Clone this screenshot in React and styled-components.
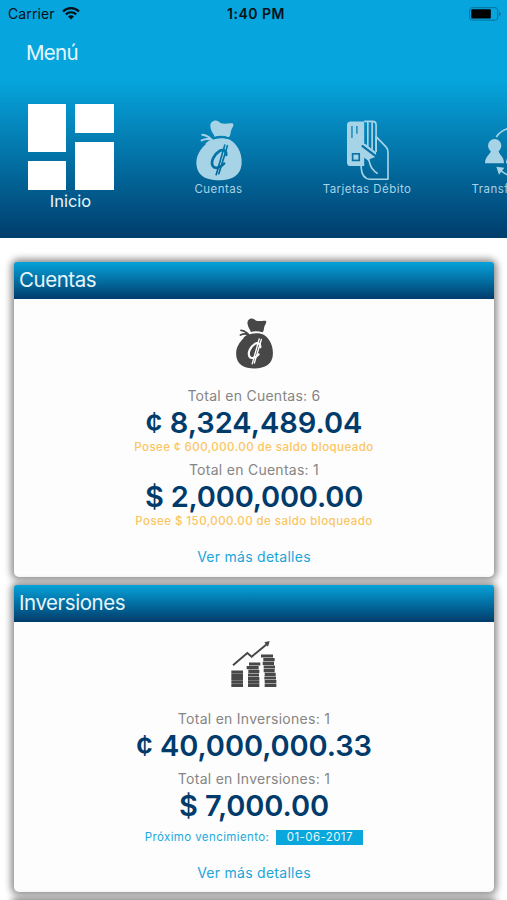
import React from 'react';
import styled, { createGlobalStyle } from 'styled-components'

function MoneyBag({ id, ...props }) {
  return (
    <svg viewBox="0 0 145 185" preserveAspectRatio="none" fill="currentColor" { ...props }>
      <mask id={ id }>
        <rect width="145" height="185" fill="#fff" />
        <g fill="none" stroke="#000" strokeLinecap="round">
          <path d="M94 106C96 92 84 88 74 94C58 104 46 126 54 140C60 150 78 144 88 132" strokeWidth="8" />
          <path d="M90 76L64 166M98 78L72 163" strokeWidth="5" />
        </g>
      </mask>
      <path d="M58 47C50 36 41 16 50 7C60-2 69 1 77 9C90 14 103 8 113 10C121 14 112 23 109 32C107 41 107 49 102 52C87 47 72 47 58 51Z" />
      <path d="M22 45C32 45 40 51 48 57M20 62C30 57 42 57 50 60L35 72" fill="none" stroke="currentColor" strokeWidth="6" strokeLinecap="round" />
      <path mask={ `url(#${id})` } d="M47 63C62 54 88 53 105 60C125 70 142 97 141 130C140 168 112 183 73 183C34 183 5 170 4 130C4 102 24 76 47 63Z" />
    </svg>
  );
}

function CardHand(props) {
  return (
    <svg viewBox="0 0 130 182" fill="none" { ...props }>
      <path d="M14 3H55V138H14Q3 138 3 127V14Q3 3 14 3Z" fill="currentColor" />
      <path d="M55 3H80Q91 3 91 14V95M66 4V78M79 4V88" stroke="currentColor" strokeWidth="5" />
      <path d="M18 17V53M33 17V40" stroke="#0a83b8" strokeWidth="4" />
      <rect x="20" y="101" width="20" height="20" stroke="#0871a7" strokeWidth="5" />
      <path d="M45 76Q50 67 60 72L91 96V110L72 117L70 124L55 112Z" fill="currentColor" />
      <path d="M50 78L99 115" stroke="#0871a7" strokeWidth="7" strokeLinecap="round" />
      <path d="M54 110Q68 114 71 126Q75 148 96 161M91 49L121 80Q127 87 127 96V178H72C54 176 47 164 46 144V128M91 49V95" stroke="currentColor" strokeWidth="5" strokeLinejoin="round" />
    </svg>
  );
}

function Transfer(props) {
  return (
    <svg viewBox="0 0 180 183" { ...props }>
      <g fill="currentColor">
        <circle cx="29" cy="77" r="20" />
        <path d="M19 88H40C40 105 57 107 57 130H0C0 108 18 104 19 88Z" />
        <circle cx="90" cy="77" r="20" />
        <path d="M80 88H101C101 105 118 107 118 130H63C63 108 79 104 80 88Z" />
        <path d="M34 140L58 143L42 164Z" />
      </g>
      <path d="M34 51C46 33 62 25 88 22M46 150C58 162 72 169 92 170" fill="none" stroke="currentColor" strokeWidth="5" />
    </svg>
  );
}

function CoinChart(props) {
  return (
    <svg viewBox="0 0 144 144" fill="none" stroke="currentColor" { ...props }>
      <path d="M9 73L52 36L65 47L112 8" strokeWidth="6" />
      <path d="M103 4L119 0L114 17Z" fill="currentColor" stroke="none" />
      <g strokeWidth="9.5">
        <path d="M4 93H39M4 103H39M4 113H39M4 123H39M4 133H39" />
        <path d="M57 69H91M50 80H86M55 91H88M54 102H87M54 113H88M54 123H88M54 133H88" />
        <path d="M93 45H129M100 56H134M98 67H132M101 78H135M101 89H134M104 100H137M103 111H138M104 122H139M104 133H139" />
      </g>
    </svg>
  );
}

function StatusBar() {
  return (
    <Status>
      <Carrier>
        Carrier
        <svg width="18" height="13" viewBox="0 0 18 13" fill="none" stroke="#061017">
          <path d="M1 4.5C5.5 0 12.5 0 17 4.5M3.8 7.4C6.8 4.5 11.2 4.5 14.2 7.4" strokeWidth="2.2" />
          <path d="M6 9.4Q9 6.9 12 9.4L9 12.4Z" fill="#061017" stroke="none" />
        </svg>
      </Carrier>
      <Clock>1:40 PM</Clock>
      <svg width="33" height="14" viewBox="0 0 33 14">
        <rect x=".7" y=".7" width="28" height="12.4" rx="2.5" fill="none" stroke="#08719a" />
        <rect x="2.3" y="2.3" width="19.5" height="9.2" rx="1" />
        <path d="M30 4.8Q34 7 30 9.2Z" fill="#08719a" />
      </svg>
    </Status>
  );
}

function App() {
  return (
    <Screen>
      <GlobalStyle />
      <Header>
        <StatusBar />
        <MenuTitle>Menú</MenuTitle>
        <Menu>
          <MenuItem $width={ 141 } $active>
            <Tiles>
              <TileColumn><Tile $grow={ 48 } /><Tile $grow={ 29 } /></TileColumn>
              <TileColumn><Tile $grow={ 29 } /><Tile $grow={ 48 } /></TileColumn>
            </Tiles>
            <ActiveLabel>Inicio</ActiveLabel>
          </MenuItem>
          <MenuItem $width={ 155 }>
            <MoneyBag id="menu-bag" width="48" height="61" />
            <MenuLabel>Cuentas</MenuLabel>
          </MenuItem>
          <MenuItem $width={ 142 }>
            <CardHand width="43" height="61" />
            <MenuLabel>Tarjetas Débito</MenuLabel>
          </MenuItem>
          <MenuItem $width={ 154 }>
            <Transfer width="60" height="61" />
            <MenuLabel>Transferencias</MenuLabel>
          </MenuItem>
        </Menu>
      </Header>
      <Cards>
        <Card $height={ 315 }>
          <CardTitle>Cuentas</CardTitle>
          <CardIcon><MoneyBag id="card-bag" width="39" height="51" /></CardIcon>
          <Total>Total en Cuentas: 6</Total>
          <Amount>¢ 8,324,489.04</Amount>
          <Blocked>Posee ¢ 600,000.00 de saldo bloqueado</Blocked>
          <Total $top={ 4 }>Total en Cuentas: 1</Total>
          <Amount $spacing={ -0.2 }>$ 2,000,000.00</Amount>
          <Blocked>Posee $ 150,000.00 de saldo bloqueado</Blocked>
          <More $top={ 18 }>Ver más detalles</More>
        </Card>
        <Card $height={ 307 }>
          <CardTitle>Inversiones</CardTitle>
          <CardIcon><CoinChart width="48" height="48" /></CardIcon>
          <Total>Total en Inversiones: 1</Total>
          <Amount $spacing={ -0.1 }>¢ 40,000,000.33</Amount>
          <Total $top={ 5 }>Total en Inversiones: 1</Total>
          <Amount $spacing={ -0.1 }>$ 7,000.00</Amount>
          <Due>
            Próximo vencimiento:
            <DueDate>01-06-2017</DueDate>
          </Due>
          <More $top={ 12 }>Ver más detalles</More>
        </Card>
        <Card $height={ 300 } />
      </Cards>
    </Screen>
  );
}

const GlobalStyle = createGlobalStyle`
  body {
    margin: 0;
    background: #fff;
    font-family: Inter, "Liberation Sans", sans-serif;
  }

  * {
    box-sizing: border-box;
  }
`

const Screen = styled.div`
  width: 507px;
  height: 900px;
  overflow: hidden;
  background: #fff;
`

const Header = styled.header`
  height: 238px;
  display: flex;
  flex-direction: column;
  overflow: hidden;
  background: linear-gradient(#06a5dd 0, #06a5dd 80px, #003d6c 238px);
`

const Status = styled.div`
  height: 27px;
  padding: 0 5px 0 8px;
  display: grid;
  grid-template-columns: 1fr auto 1fr;
  align-items: center;
  color: #061017;

  > :last-child {
    justify-self: end;
  }
`

const Carrier = styled.div`
  display: flex;
  align-items: center;
  gap: 7px;
  font-size: 14px;
  letter-spacing: 0.1px;
`

const Clock = styled.div`
  margin-left: 2px;
  font-size: 14px;
  font-weight: 600;
  letter-spacing: 0.5px;
`

const MenuTitle = styled.h1`
  margin: 11px 0 0 26px;
  line-height: 29px;
  font-size: 20.5px;
  font-weight: 400;
  letter-spacing: -0.7px;
  color: #e6f7fd;
`

const Menu = styled.nav`
  display: flex;
  margin-top: 37px;
`

const MenuItem = styled.div`
  width: ${ props => props.$width }px;
  flex-shrink: 0;
  display: flex;
  flex-direction: column;
  align-items: center;
  padding-top: ${ props => props.$active ? 0 : 16 }px;
  color: #a7d3e6;
`

const Tiles = styled.div`
  display: flex;
  gap: 9px;
  width: 86px;
  height: 86px;
`

const TileColumn = styled.div`
  flex: 1;
  display: flex;
  flex-direction: column;
  gap: 9px;
`

const Tile = styled.div`
  flex: ${ props => props.$grow };
  background: #fff;
`

const ActiveLabel = styled.div`
  font-size: 16.5px;
  line-height: 22px;
  color: #eaf5fa;
`

const MenuLabel = styled.div`
  font-size: 11.5px;
  line-height: 16px;
  letter-spacing: 0.45px;
  white-space: nowrap;
`

const Cards = styled.main`
  display: flex;
  flex-direction: column;
  gap: 8px;
  padding: 24px 13px 0 14px;
`

const Card = styled.section`
  height: ${ props => props.$height }px;
  flex-shrink: 0;
  display: flex;
  flex-direction: column;
  align-items: center;
  background: #fdfdfd;
  border-radius: 5px;
  box-shadow: 0 0 7px 3px #8e8e8e;
`

const CardTitle = styled.h2`
  align-self: stretch;
  height: 37px;
  margin: 0;
  padding-left: 5px;
  line-height: 36px;
  font-size: 20.5px;
  font-weight: 400;
  letter-spacing: -0.45px;
  color: #e6f5fc;
  border-radius: 3px 3px 0 0;
  background: linear-gradient(#06a2da, #003c6b);
`

const CardIcon = styled.div`
  height: 86px;
  padding-top: 19px;
  color: #474747;
`

const Total = styled.div`
  margin-top: ${ props => props.$top || 0 }px;
  font-size: 14px;
  line-height: 21px;
  letter-spacing: 0.27px;
  color: #858585;
`

const Amount = styled.div`
  font-size: 29px;
  font-weight: 600;
  line-height: 34px;
  letter-spacing: ${ props => props.$spacing || 0 }px;
  color: #003b6b;
`

const Blocked = styled.div`
  font-size: 11.5px;
  line-height: 15px;
  letter-spacing: 0.45px;
  font-weight: 500;
  color: #fbc55f;
`

const Due = styled.div`
  display: flex;
  align-items: center;
  gap: 7px;
  height: 28px;
  font-size: 11.5px;
  letter-spacing: 0.4px;
  color: #22a9dc;
`

const DueDate = styled.span`
  width: 87px;
  height: 15px;
  line-height: 15px;
  text-align: center;
  color: #e7f7fd;
  background: #09a7dc;
`

const More = styled.a`
  margin-top: ${ props => props.$top }px;
  font-size: 14px;
  line-height: 20px;
  letter-spacing: 0.27px;
  color: #1ba5da;
`

export default App;
